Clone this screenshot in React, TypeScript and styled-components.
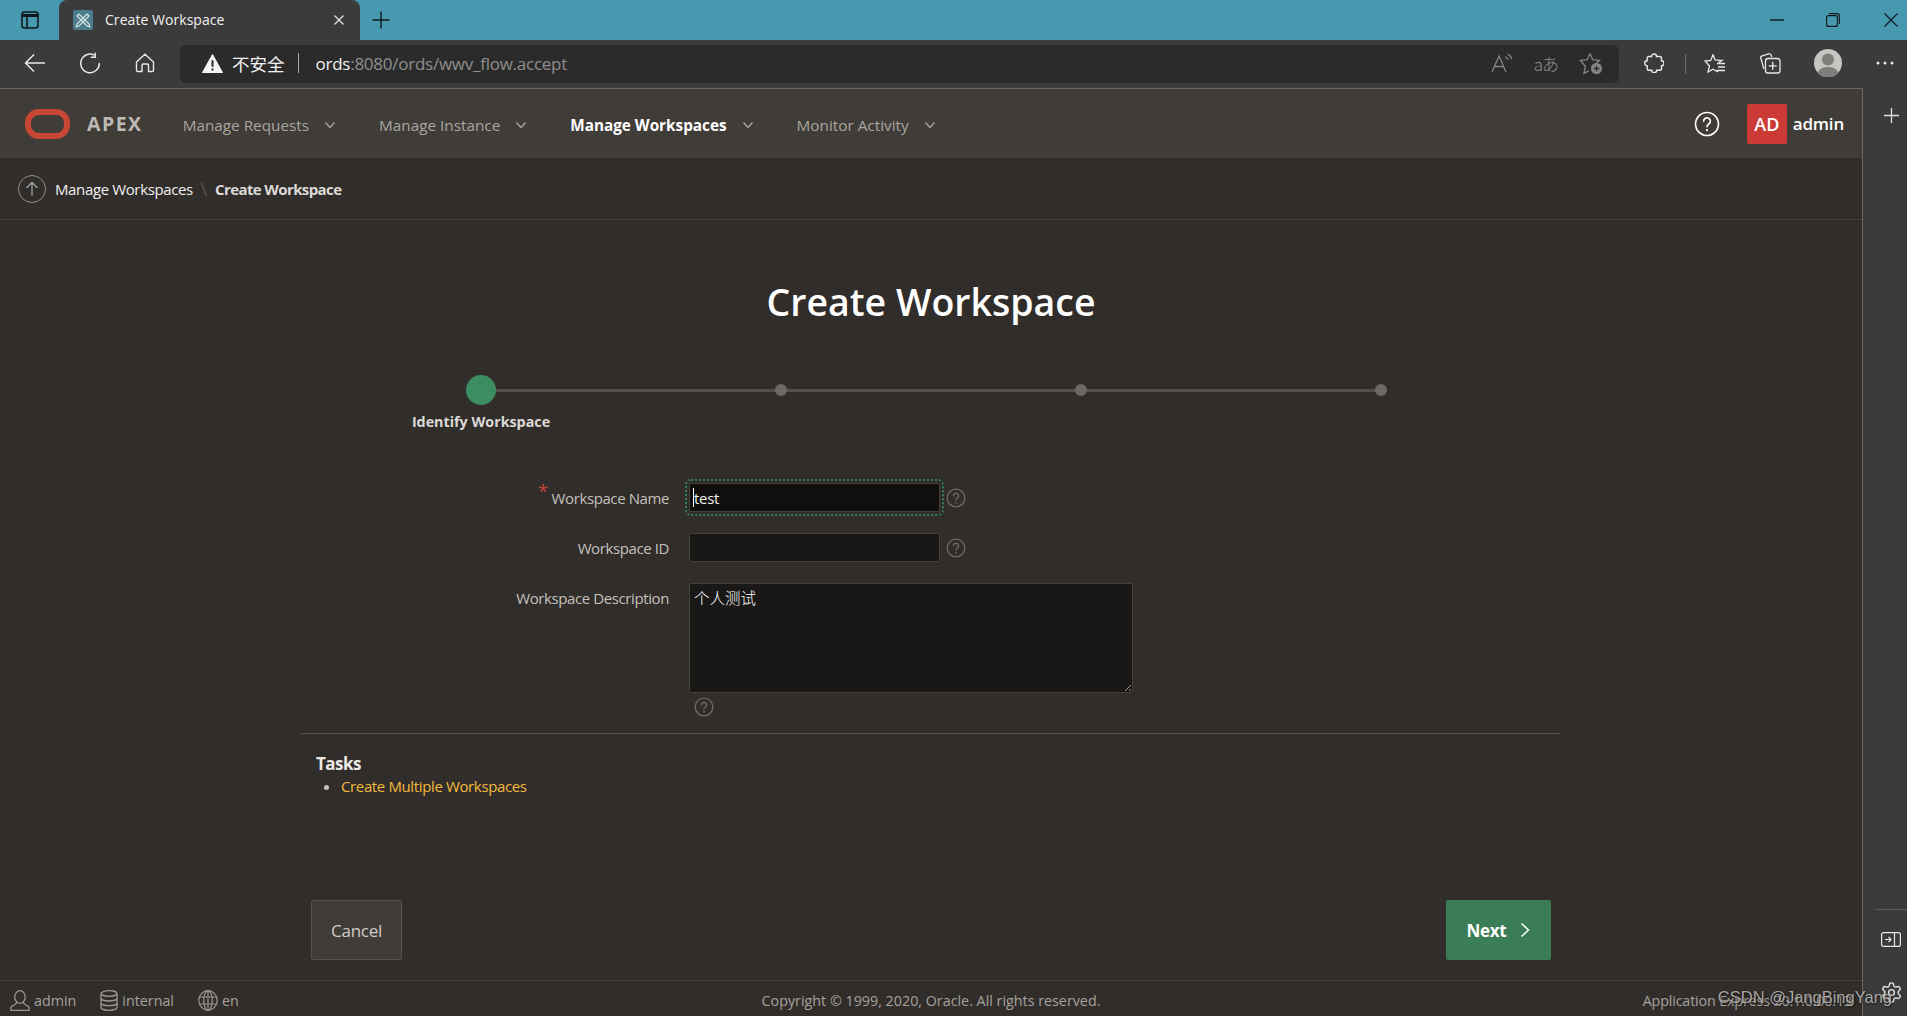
import React from "react";
import styled, { createGlobalStyle } from "styled-components";

const uiFont = `"Open Sans", "Noto Sans", "Noto Sans CJK SC", sans-serif`;

const GlobalStyle = createGlobalStyle`
  html, body {
    margin: 0;
    padding: 0;
    height: 100%;
    background: #312d2a;
    overflow: hidden;
  }
  * { box-sizing: border-box; }
`;

function Help({ size = 20, color = "#6d6a67", weight = 1.6 }: { size?: number; color?: string; weight?: number }) {
  return (
    <svg width={size} height={size} viewBox="0 0 24 24" fill="none" stroke={color} strokeWidth={weight} strokeLinecap="round">
      <circle cx="12" cy="12" r="10.6" />
      <path d="M8.9 9.4a3.1 3.1 0 1 1 4.8 2.6c-1.1.7-1.7 1.3-1.7 2.5" />
      <path d="M12 17.6v.1" strokeWidth={weight * 1.3} />
    </svg>
  );
}

function Chevron({ color = "#a9a6a2" }: { color?: string }) {
  return (
    <svg width="14" height="14" viewBox="0 0 14 14" fill="none" stroke={color} strokeWidth="1.4">
      <path d="M2.5 4.5 7 9.5l4.5-5" />
    </svg>
  );
}

export default function App() {
  return (
    <Shell>
      <GlobalStyle />
      <TitleBar>
        <Slot $w={59}>
          <svg width="18" height="18" viewBox="0 0 18 18" fill="none" stroke="#10181c" strokeWidth="1.6">
            <rect x="1" y="1" width="16" height="16" rx="2.5" />
            <path d="M1 4.5h16" strokeWidth="3" />
            <path d="M6 4.5V17" />
          </svg>
        </Slot>
        <Tab>
          <TabFavicon>
            <svg width="20" height="20" viewBox="0 0 20 20" fill="none" stroke="#dfe8ea" strokeWidth="1.1">
              <rect width="20" height="20" rx="2" fill="#4b7c8c" stroke="none" />
              <path d="M4 6 6 4l10 10 .8 2.8L14 16 4 6Z" />
              <path d="M16 6 14 4 4 14l-.8 2.8L6 16 16 6Z" />
            </svg>
          </TabFavicon>
          <TabTitle>Create Workspace</TabTitle>
          <svg width="12" height="12" viewBox="0 0 12 12" stroke="#e6e6e6" strokeWidth="1.3">
            <path d="M1.5 1.5l9 9M10.5 1.5l-9 9" />
          </svg>
        </Tab>
        <Slot $w={42}>
          <svg width="18" height="18" viewBox="0 0 18 18" stroke="#10181c" strokeWidth="1.4">
            <path d="M9 .5v17M.5 9h17" />
          </svg>
        </Slot>
        <Spacer />
        <Slot $w={28}>
          <svg width="14" height="2" viewBox="0 0 14 2" stroke="#10181c" strokeWidth="1.4"><path d="M0 1h14" /></svg>
        </Slot>
        <Slot $w={84}>
          <svg width="14" height="14" viewBox="0 0 14 14" fill="none" stroke="#10181c" strokeWidth="1.1">
            <rect x=".6" y="2.6" width="10.8" height="10.8" rx="2" />
            <path d="M3 .6h8a2.4 2.4 0 0 1 2.4 2.4v8" />
          </svg>
        </Slot>
        <Slot $w={32}>
          <svg width="14" height="14" viewBox="0 0 14 14" stroke="#10181c" strokeWidth="1.1">
            <path d="M.5.5l13 13M13.5.5l-13 13" />
          </svg>
        </Slot>
      </TitleBar>

      <Toolbar>
        <Slot $w={55} $first>
          <svg width="22" height="20" viewBox="0 0 22 20" fill="none" stroke="#e8e8e8" strokeWidth="1.5">
            <path d="M21 10H2M10 1.5 1.5 10l8.5 8.5" />
          </svg>
        </Slot>
        <Slot $w={55}>
          <svg width="22" height="22" viewBox="0 0 22 22" fill="none" stroke="#e8e8e8" strokeWidth="1.5">
            <path d="M15.5 3.3A9.3 9.3 0 1 0 20.3 11" />
            <path d="M16.2.8v4.4h-4.4" />
          </svg>
        </Slot>
        <Slot $w={55}>
          <svg width="20" height="20" viewBox="0 0 20 20" fill="none" stroke="#e8e8e8" strokeWidth="1.4">
            <path d="M1.5 9 10 1.3 18.5 9v8.2a1.3 1.3 0 0 1-1.3 1.3h-3.7v-6.3a1.2 1.2 0 0 0-1.2-1.2H8.2A1.2 1.2 0 0 0 7 12.2v6.3H2.8a1.3 1.3 0 0 1-1.3-1.3V9Z" />
          </svg>
        </Slot>
        <AddressBar>
          <svg width="21" height="19" viewBox="0 0 21 19">
            <path d="M10.5.5 20.5 18.5H.5L10.5.5Z" fill="#f5f5f5" stroke="#f5f5f5" strokeLinejoin="round" />
            <path d="M10.5 6.2v6.6M10.5 14.5v2" stroke="#2b2b2b" strokeWidth="2" />
          </svg>
          <Insecure>不安全</Insecure>
          <AddressSep />
          <Url>
            <strong>ords</strong>:8080/ords/wwv_flow.accept
          </Url>
          <Spacer />
          <AddressIcons>
            <svg width="22" height="20" viewBox="0 0 22 20" fill="none" stroke="#858585" strokeWidth="1.3">
              <path d="M1 19 8 3l7 16M3.6 13.5h9" />
              <path d="M14 3.5c1.6.6 2.6 1.7 3 3.4M16.5 1c2.2.9 3.6 2.6 4.2 5" />
            </svg>
            <TranslateGlyph>aあ</TranslateGlyph>
            <svg width="24" height="24" viewBox="0 0 24 24" fill="none" stroke="#858585" strokeWidth="1.3">
              <path d="M11 2.500 13.800 8.700l6.700.7-5 4.500.2 1.100M9.800 19.800 5 22.300l1.300-7L1.500 9.400l6.700-.7L11 2.500" />
              <circle cx="17.500" cy="17.500" r="5.500" fill="#858585" stroke="none" />
              <path d="M17.500 14.800v5.400M14.800 17.500h5.400" stroke="#2b2b2b" strokeWidth="1.3" />
            </svg>
          </AddressIcons>
        </AddressBar>
        <Slot $w={70}>
          <svg width="20" height="20" viewBox="0 0 20 20" fill="none" stroke="#e8e8e8" strokeWidth="1.4">
            <path d="M7.500 3.500a2.500 2.500 0 0 1 5 0h3.200a1.800 1.800 0 0 1 1.800 1.800v2.400a2.500 2.500 0 0 1 0 5v2.700a1.800 1.800 0 0 1-1.800 1.800h-3a2.500 2.500 0 0 1-5 0H5a1.800 1.800 0 0 1-1.800-1.800v-2.700a2.500 2.500 0 0 1 0-5V5.300A1.800 1.800 0 0 1 5 3.500h2.500Z" />
          </svg>
        </Slot>
        <ToolbarSep />
        <Slot $w={52}>
          <svg width="22" height="20" viewBox="0 0 22 20" fill="none" stroke="#e8e8e8" strokeWidth="1.3">
            <path d="M9 1.500 11 7l5.500.4H18L13 11M14 19l-5-2.800L4 19l1.500-6L1 8l5.800-.6L9 1.500" />
            <path d="M14.500 10.500H21M14 14h7M12.500 17.500H21" />
          </svg>
        </Slot>
        <Slot $w={58}>
          <svg width="22" height="22" viewBox="0 0 22 22" fill="none" stroke="#e8e8e8" strokeWidth="1.3">
            <path d="M5 17 1.800 6.300a2 2 0 0 1 1.300-2.500l6.600-2a2 2 0 0 1 2.500 1.400l.5 1.800" />
            <rect x="6.500" y="6.500" width="14.500" height="14.500" rx="2.600" />
            <path d="M13.700 9.800v8M9.700 13.800h8" />
          </svg>
        </Slot>
        <Slot $w={58}>
          <ProfileAvatar>
            <svg width="28" height="28" viewBox="0 0 28 28">
              <circle cx="14" cy="10.500" r="6" fill="#7f7d7a" />
              <path d="M3.500 24c1.800-4.500 5.800-6 10.500-6s8.700 1.500 10.500 6a14 14 0 0 1-21 0Z" fill="#7f7d7a" />
            </svg>
          </ProfileAvatar>
        </Slot>
        <Slot $w={44} $pad={6}>
          <svg width="18" height="4" viewBox="0 0 18 4" fill="#e8e8e8">
            <circle cx="2" cy="2" r="1.500" />
            <circle cx="9" cy="2" r="1.500" />
            <circle cx="16" cy="2" r="1.500" />
          </svg>
        </Slot>
      </Toolbar>

      <Body>
        <Page>
          <Header>
            <Logo>
              <LogoRing />
              <LogoText>APEX</LogoText>
            </Logo>
            <Nav>
              <NavItem>
                Manage Requests
                <Chevron />
              </NavItem>
              <NavItem>
                Manage Instance
                <Chevron />
              </NavItem>
              <NavItem $active>
                Manage Workspaces
                <Chevron />
              </NavItem>
              <NavItem>
                Monitor Activity
                <Chevron />
              </NavItem>
            </Nav>
            <Spacer />
            <Help size={26} color="#ffffff" weight={1.5} />
            <Avatar>AD</Avatar>
            <UserName>admin</UserName>
          </Header>

          <Breadcrumb>
            <UpButton>
              <svg width="14" height="16" viewBox="0 0 14 16" fill="none" stroke="#9aa5a5" strokeWidth="1.3">
                <path d="M7 15V1.500M1.500 7 7 1.500 12.500 7" />
              </svg>
            </UpButton>
            <CrumbLink>Manage Workspaces</CrumbLink>
            <CrumbSep>\</CrumbSep>
            <CrumbCurrent>Create Workspace</CrumbCurrent>
          </Breadcrumb>

          <Content>
            <Wizard>
              <Title>Create Workspace</Title>
              <Steps>
                <Step $current $line>
                  <StepLabel>Identify Workspace</StepLabel>
                </Step>
                <Step $line />
                <Step $line />
                <Step />
              </Steps>

              <FormRow $top={51}>
                <FieldLabel>
                  <Required>*</Required>
                  Workspace Name
                </FieldLabel>
                <FocusWrap>
                  <Input defaultValue="test" readOnly />
                </FocusWrap>
                <HelpSlot>
                  <Help />
                </HelpSlot>
              </FormRow>
              <FormRow $top={20}>
                <FieldLabel>Workspace ID</FieldLabel>
                <Input readOnly />
                <HelpSlot>
                  <Help />
                </HelpSlot>
              </FormRow>
              <FormRow $top={20}>
                <FieldLabel>Workspace Description</FieldLabel>
                <TextArea defaultValue="个人测试" readOnly />
              </FormRow>
              <BelowHelp>
                <Help />
              </BelowHelp>

              <Tasks>
                <TasksTitle>Tasks</TasksTitle>
                <TaskList>
                  <li>
                    <TaskLink href="#">Create Multiple Workspaces</TaskLink>
                  </li>
                </TaskList>
              </Tasks>
            </Wizard>

            <Buttons>
              <CancelButton>Cancel</CancelButton>
              <NextButton>
                Next
                <svg width="10" height="16" viewBox="0 0 10 16" fill="none" stroke="#ffffff" strokeWidth="1.5">
                  <path d="M1.500 1.500 8.500 8l-7 6.500" />
                </svg>
              </NextButton>
            </Buttons>
          </Content>

          <Footer>
            <FooterLeft>
              <FooterItem>
                <svg width="20" height="21" viewBox="0 0 20 21" fill="none" stroke="#9b9894" strokeWidth="1.3">
                  <ellipse cx="10" cy="7" rx="5.300" ry="6.300" />
                  <path d="M6.800 12c-.3 1.500-1 2.300-2.600 3-2 .9-3.400 1.600-3.400 3v2.300h18.400V18c0-1.400-1.400-2.100-3.400-3-1.600-.7-2.300-1.500-2.600-3" />
                </svg>
                admin
              </FooterItem>
              <FooterItem>
                <svg width="18" height="21" viewBox="0 0 18 21" fill="none" stroke="#9b9894" strokeWidth="1.3">
                  <ellipse cx="9" cy="3.500" rx="8" ry="2.800" />
                  <path d="M1 3.500v14c0 1.500 3.600 2.800 8 2.800s8-1.300 8-2.800v-14M1 8.200c0 1.500 3.600 2.800 8 2.800s8-1.300 8-2.800M1 12.900c0 1.500 3.600 2.800 8 2.800s8-1.300 8-2.800" />
                </svg>
                internal
              </FooterItem>
              <FooterItem>
                <svg width="20" height="21" viewBox="0 0 20 21" fill="none" stroke="#9b9894" strokeWidth="1.2">
                  <ellipse cx="10" cy="10.500" rx="9.200" ry="9.800" />
                  <ellipse cx="10" cy="10.500" rx="4.200" ry="9.800" />
                  <path d="M10 .7v19.600M1.500 7h17M1.500 14h17" />
                </svg>
                en
              </FooterItem>
            </FooterLeft>
            <Copyright>Copyright © 1999, 2020, Oracle. All rights reserved.</Copyright>
            <Version>Application Express 20.1.0.00.13</Version>
          </Footer>
        </Page>

        <SideBar>
          <SidePlus>
            <svg width="15" height="15" viewBox="0 0 15 15" stroke="#e0e0e0" strokeWidth="1.3">
              <path d="M7.500 0v15M0 7.500h15" />
            </svg>
          </SidePlus>
          <Spacer />
          <SideTools>
            <svg width="20" height="15" viewBox="0 0 20 15" fill="none" stroke="#e8e8e8" strokeWidth="1.2">
              <rect x=".6" y=".6" width="18.800" height="13.800" rx="2" />
              <path d="M13.500.6v13.800M4 7.500h6M7.500 5l2.500 2.500L7.500 10" />
            </svg>
            <svg width="23" height="23" viewBox="0 0 24 24" fill="none" stroke="#e8e8e8" strokeWidth="1.4">
              <path d="M12.220 2h-.44a2 2 0 0 0-2 2v.18a2 2 0 0 1-1 1.730l-.43.250a2 2 0 0 1-2 0l-.15-.08a2 2 0 0 0-2.730.730l-.220.380a2 2 0 0 0 .730 2.730l.150.100a2 2 0 0 1 1 1.720v.510a2 2 0 0 1-1 1.740l-.150.090a2 2 0 0 0-.730 2.730l.220.380a2 2 0 0 0 2.730.730l.150-.08a2 2 0 0 1 2 0l.430.250a2 2 0 0 1 1 1.730V20a2 2 0 0 0 2 2h.440a2 2 0 0 0 2-2v-.180a2 2 0 0 1 1-1.730l.430-.250a2 2 0 0 1 2 0l.150.080a2 2 0 0 0 2.730-.730l.220-.390a2 2 0 0 0-.730-2.730l-.150-.080a2 2 0 0 1-1-1.740v-.500a2 2 0 0 1 1-1.740l.150-.090a2 2 0 0 0 .730-2.730l-.220-.380a2 2 0 0 0-2.730-.730l-.150.080a2 2 0 0 1-2 0l-.430-.250a2 2 0 0 1-1-1.730V4a2 2 0 0 0-2-2Z" />
              <circle cx="12" cy="12" r="3" />
            </svg>
          </SideTools>
        </SideBar>
      </Body>
      <Watermark>CSDN @JangBingYang</Watermark>
    </Shell>
  );
}

const Shell = styled.div`
  position: relative;
  display: flex;
  flex-direction: column;
  height: 100vh;
  font-family: ${uiFont};
  color: #fff;
  background: #3b3b3b;
`;

const Spacer = styled.div`
  flex: 1;
`;

const Slot = styled.div<{ $w: number; $first?: boolean; $pad?: number }>`
  display: flex;
  align-items: center;
  justify-content: center;
  flex: none;
  width: ${(p) => p.$w}px;
  margin-left: ${(p) => (p.$first ? 7 : p.$pad ?? 0)}px;
`;

const TitleBar = styled.div`
  display: flex;
  align-items: stretch;
  height: 40px;
  background: #4699ae;
`;

const Tab = styled.div`
  display: flex;
  align-items: center;
  width: 301px;
  padding: 0 15px 0 14px;
  background: #3b3b3b;
  border-radius: 8px 8px 0 0;
`;

const TabFavicon = styled.div`
  display: flex;
  flex: none;
  margin-right: 12px;
`;

const TabTitle = styled.div`
  flex: 1;
  padding-bottom: 2px;
  font-size: 14px;
  letter-spacing: 0.05px;
  color: #f2f2f2;
`;

const Toolbar = styled.div`
  display: flex;
  align-items: stretch;
  height: 48px;
  padding: 5px 0;
  background: #3b3b3b;

  & > ${Slot} {
    padding-bottom: 2px;
  }
`;

const AddressBar = styled.div`
  display: flex;
  align-items: center;
  flex: none;
  width: 1439px;
  margin-left: 8px;
  padding: 0 0 2px 22px;
  background: #2b2b2b;
  border-radius: 6px;
`;

const Insecure = styled.span`
  margin-left: 9px;
  font-family: "Noto Sans CJK SC", sans-serif;
  font-size: 17.5px;
  color: #f2f2f2;
`;

const AddressSep = styled.div`
  width: 1px;
  height: 20px;
  margin: 0 17px 0 13px;
  background: #a8a8a8;
`;

const Url = styled.div`
  font-size: 17px;
  color: #8f8f8f;
  letter-spacing: -0.25px;

  strong {
    font-weight: 400;
    color: #f0f0f0;
  }
`;

const AddressIcons = styled.div`
  display: flex;
  align-items: center;
  gap: 21px;
  margin-right: 16px;
`;

const TranslateGlyph = styled.span`
  font-family: "Noto Sans CJK JP", sans-serif;
  font-size: 17px;
  font-weight: 300;
  letter-spacing: -1px;
  color: #8c8c8c;
`;

const ToolbarSep = styled.div`
  flex: none;
  width: 1px;
  height: 20px;
  align-self: center;
  margin: 0 3px 0 -4px;
  background: #6a6a6a;
`;

const ProfileAvatar = styled.div`
  display: flex;
  width: 28px;
  height: 28px;
  border-radius: 50%;
  background: #c6c5c2;
`;

const Body = styled.div`
  display: flex;
  flex: 1;
  min-height: 0;
`;

const Page = styled.div`
  display: flex;
  flex-direction: column;
  flex: none;
  width: 1863px;
  background: #312d2a;
  border-top: 1px solid #6b6965;
  border-right: 1px solid #6b6965;
`;

const Header = styled.header`
  display: flex;
  align-items: center;
  flex: none;
  height: 69px;
  padding: 0 18px 0 25px;
  background: #403c37;
`;

const Logo = styled.div`
  display: flex;
  align-items: center;
`;

const LogoRing = styled.div`
  width: 45px;
  height: 30px;
  border: 6px solid #c74634;
  border-radius: 14px;
`;

const LogoText = styled.div`
  margin-left: 17px;
  font-size: 19.5px;
  font-weight: 700;
  letter-spacing: 1.5px;
  color: #bdbab5;
`;

const Nav = styled.nav`
  display: flex;
  margin-left: 40px;
`;

const NavItem = styled.div<{ $active?: boolean }>`
  display: flex;
  align-items: center;
  gap: 14px;
  margin-right: 42px;
  padding-top: 3px;
  font-size: 15.3px;
  font-weight: ${(p) => (p.$active ? 700 : 400)};
  color: ${(p) => (p.$active ? "#ffffff" : "#a9a6a2")};
`;

const Avatar = styled.div`
  display: flex;
  align-items: center;
  justify-content: center;
  width: 40px;
  height: 40px;
  margin-left: 27px;
  border-radius: 2px;
  font-size: 18px;
  font-weight: 600;
  background: #cc3a35;
`;

const UserName = styled.div`
  margin-left: 6px;
  font-size: 17px;
  font-weight: 600;
  letter-spacing: -0.2px;
`;

const Breadcrumb = styled.div`
  display: flex;
  align-items: center;
  flex: none;
  height: 62px;
  padding: 0 0 0 18px;
  border-bottom: 1px solid #433f3b;
`;

const UpButton = styled.div`
  display: flex;
  align-items: center;
  justify-content: center;
  width: 28px;
  height: 28px;
  border: 1px solid #8a9090;
  border-radius: 50%;
`;

const CrumbLink = styled.div`
  margin-left: 9px;
  font-size: 15px;
  letter-spacing: -0.37px;
  color: #f0f0f0;
`;

const CrumbSep = styled.div`
  margin: 0 8px;
  font-size: 18px;
  font-weight: 300;
  color: #6b6965;
`;

const CrumbCurrent = styled.div`
  font-size: 15px;
  font-weight: 700;
  letter-spacing: -0.6px;
  color: #dcdad7;
`;

const Content = styled.main`
  display: flex;
  flex-direction: column;
  flex: 1;
  width: 1260px;
  margin-left: 301px;
`;

const Wizard = styled.div`
  flex: 1;
`;

const Title = styled.h1`
  margin: 55px 0 0;
  font-size: 37.5px;
  line-height: 54px;
  font-weight: 600;
  text-align: center;
  color: #fff;
`;

const Steps = styled.div`
  display: flex;
  margin: 46px 30px 0;
`;

const Step = styled.div<{ $current?: boolean; $line?: boolean }>`
  position: relative;
  flex: 1;
  display: flex;
  flex-direction: column;
  align-items: center;

  &::before {
    content: "";
    flex: none;
    width: ${(p) => (p.$current ? 30 : 12)}px;
    height: ${(p) => (p.$current ? 30 : 12)}px;
    margin: ${(p) => (p.$current ? 0 : 9)}px 0;
    border-radius: 50%;
    background: ${(p) => (p.$current ? "#3d8d63" : "#6d6864")};
    z-index: 1;
  }

  &::after {
    content: "";
    display: ${(p) => (p.$line ? "block" : "none")};
    position: absolute;
    top: 14px;
    left: 50%;
    width: 100%;
    height: 3px;
    background: #55504b;
  }
`;

const StepLabel = styled.div`
  margin-top: 7px;
  font-size: 14.3px;
  line-height: 20px;
  font-weight: 700;
  text-align: center;
  color: #dcdad7;
`;

const FormRow = styled.div<{ $top: number }>`
  display: flex;
  align-items: flex-start;
  margin-top: ${(p) => p.$top}px;
`;

const FieldLabel = styled.label`
  display: flex;
  justify-content: flex-end;
  flex: none;
  width: 368px;
  margin-right: 20px;
  line-height: 30px;
  font-size: 15px;
  letter-spacing: -0.4px;
  color: #c4c1bd;
`;

const Required = styled.span`
  height: 15px;
  margin-right: 4px;
  margin-top: -7px;
  font-size: 18px;
  color: #c74634;
`;

const FocusWrap = styled.div`
  position: relative;
  display: flex;
  outline: 2px dotted #2f7d57;
  outline-offset: 2px;
  border-radius: 2px;

  &::after {
    content: "";
    position: absolute;
    top: 5px;
    left: 4px;
    width: 1px;
    height: 19px;
    background: #fff;
  }
`;

const Input = styled.input`
  width: 251px;
  height: 29px;
  padding: 0 4px;
  border: 1px solid #44413d;
  border-radius: 2px;
  font-family: ${uiFont};
  font-size: 15px;
  letter-spacing: -0.3px;
  color: #f0f0f0;
  background: #191817;
  outline: none;

  ${FocusWrap} & {
    background: #100f0e;
  }
`;

const HelpSlot = styled.div`
  display: flex;
  align-items: center;
  height: 29px;
  margin-left: 6px;
`;

const TextArea = styled.textarea`
  display: block;
  width: 444px;
  height: 110px;
  padding: 2px 4px;
  border: 1px solid #44413d;
  border-radius: 2px;
  font-family: "Noto Sans CJK SC", sans-serif;
  font-size: 15.5px;
  font-weight: 300;
  color: #ffffff;
  background: #191817;
  outline: none;
`;

const BelowHelp = styled.div`
  display: flex;
  margin: 4px 0 0 393px;
`;

const Tasks = styled.div`
  margin-top: 16px;
  padding: 19px 15px 0;
  border-top: 1px solid #55504b;
`;

const TasksTitle = styled.div`
  font-size: 17px;
  font-weight: 700;
  line-height: 22px;
  letter-spacing: -0.55px;
  color: #ece9e5;
`;

const TaskList = styled.ul`
  margin: 0;
  padding: 0 0 0 25px;
  font-size: 15px;
  line-height: 23px;
  color: #c4c1bd;
`;

const TaskLink = styled.a`
  letter-spacing: -0.37px;
  color: #f3b93f;
  text-decoration: none;
`;

const Buttons = styled.div`
  display: flex;
  justify-content: space-between;
  flex: none;
  margin-bottom: 20px;
  padding: 0 10px;
`;

const CancelButton = styled.button`
  width: 91px;
  height: 60px;
  border: 1px solid #55514c;
  border-radius: 2px;
  font-family: ${uiFont};
  font-size: 17px;
  letter-spacing: -0.3px;
  color: #d0cdc9;
  background: #403c37;
`;

const NextButton = styled.button`
  display: flex;
  align-items: center;
  justify-content: center;
  gap: 14px;
  width: 105px;
  height: 60px;
  border: 0;
  border-radius: 2px;
  font-family: ${uiFont};
  font-size: 17px;
  font-weight: 700;
  letter-spacing: -0.3px;
  color: #fff;
  background: #3a7d56;
`;

const Footer = styled.footer`
  display: grid;
  grid-template-columns: 1fr auto 1fr;
  align-items: center;
  flex: none;
  height: 36px;
  padding: 3px 10px 0;
  font-size: 14.3px;
  color: #a5a29e;
  border-top: 1px solid #433f3b;
`;

const FooterLeft = styled.div`
  display: flex;
  gap: 24px;
`;

const FooterItem = styled.div`
  display: flex;
  align-items: center;
  gap: 4px;
`;

const Copyright = styled.div`
  text-align: center;
`;

const Version = styled.div`
  text-align: right;
  letter-spacing: -0.15px;
`;

const SideBar = styled.aside`
  display: flex;
  flex-direction: column;
  flex: 1;
  background: #3b3b3b;
`;

const SidePlus = styled.div`
  display: flex;
  justify-content: center;
  margin-top: 20px;
  padding-left: 12px;
`;

const SideTools = styled.div`
  display: flex;
  flex-direction: column;
  align-items: center;
  gap: 34px;
  height: 107px;
  margin-left: 12px;
  padding: 22px 0 0;
  border-top: 1px solid #5c5c5c;
`;

const Watermark = styled.div`
  position: absolute;
  right: 15px;
  bottom: 9px;
  font-family: "Liberation Sans", sans-serif;
  font-size: 16.5px;
  color: rgba(190, 190, 190, 0.85);
  text-shadow: 1px 1px 2px rgba(0, 0, 0, 0.6);
`;
